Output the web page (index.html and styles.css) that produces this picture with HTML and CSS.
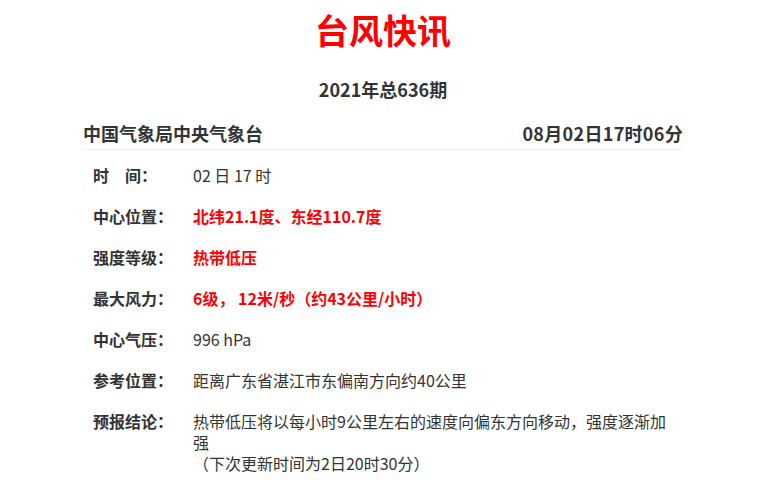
FILE: index.html
```html
<!DOCTYPE html>
<html lang="zh-CN">
<head>
  <meta charset="UTF-8">
  <meta name="viewport" content="width=device-width, initial-scale=1.0">
  <title>台风快讯</title>
  <link rel="stylesheet" href="styles.css">
</head>
<body>
  <div class="page">
    <h1>台风快讯</h1>
    <div class="issue">2021年总636期</div>
    <div class="source">
      <span>中国气象局中央气象台</span>
      <span class="time">08月02日17时06分</span>
    </div>
    <div class="info">
      <div class="row">
        <div class="label">时　间：</div>
        <div class="value">02 日 17 时</div>
      </div>
      <div class="row">
        <div class="label">中心位置：</div>
        <div class="value hot">北纬21.1度、东经110.7度</div>
      </div>
      <div class="row">
        <div class="label">强度等级：</div>
        <div class="value hot">热带低压</div>
      </div>
      <div class="row">
        <div class="label">最大风力：</div>
        <div class="value hot">6级， 12米/秒（约43公里/小时）</div>
      </div>
      <div class="row">
        <div class="label">中心气压：</div>
        <div class="value">996 hPa</div>
      </div>
      <div class="row">
        <div class="label">参考位置：</div>
        <div class="value">距离广东省湛江市东偏南方向约40公里</div>
      </div>
      <div class="row">
        <div class="label">预报结论：</div>
        <div class="value">热带低压将以每小时9公里左右的速度向偏东方向移动，强度逐渐加强<br>（下次更新时间为2日20时30分）</div>
      </div>
    </div>
  </div>
</body>
</html>
```

FILE: styles.css
```css
body {
  font-family: "Noto Sans CJK SC", "Noto Sans", sans-serif;
  background: #fff;
  color: #333;
  margin: 0;
  padding: 0;
  width: 766px;
}
.page {
  width: 600px;
  margin: 0 auto;
}
h1 {
  color: #f00;
  font-size: 34px;
  line-height: 44px;
  text-align: center;
  margin: 8px 0 0 0;
}
.issue {
  font-size: 18px;
  font-weight: bold;
  line-height: 24px;
  text-align: center;
  margin-top: 25px;
}
.source {
  display: flex;
  justify-content: space-between;
  font-size: 18px;
  font-weight: bold;
  line-height: 24px;
  margin-top: 20px;
  padding-bottom: 4px;
  border-bottom: 1px solid #eee;
}
.time {
  letter-spacing: 0.3px;
}
.info {
  margin-top: 5px;
}
.row {
  display: flex;
  padding: 10px 0 10px 10px;
  font-size: 16px;
  line-height: 21px;
}
.label {
  width: 100px;
  flex-shrink: 0;
  font-weight: bold;
}
.value {
  width: 480px;
}
.hot {
  color: #f00;
  font-weight: bold;
}
```
